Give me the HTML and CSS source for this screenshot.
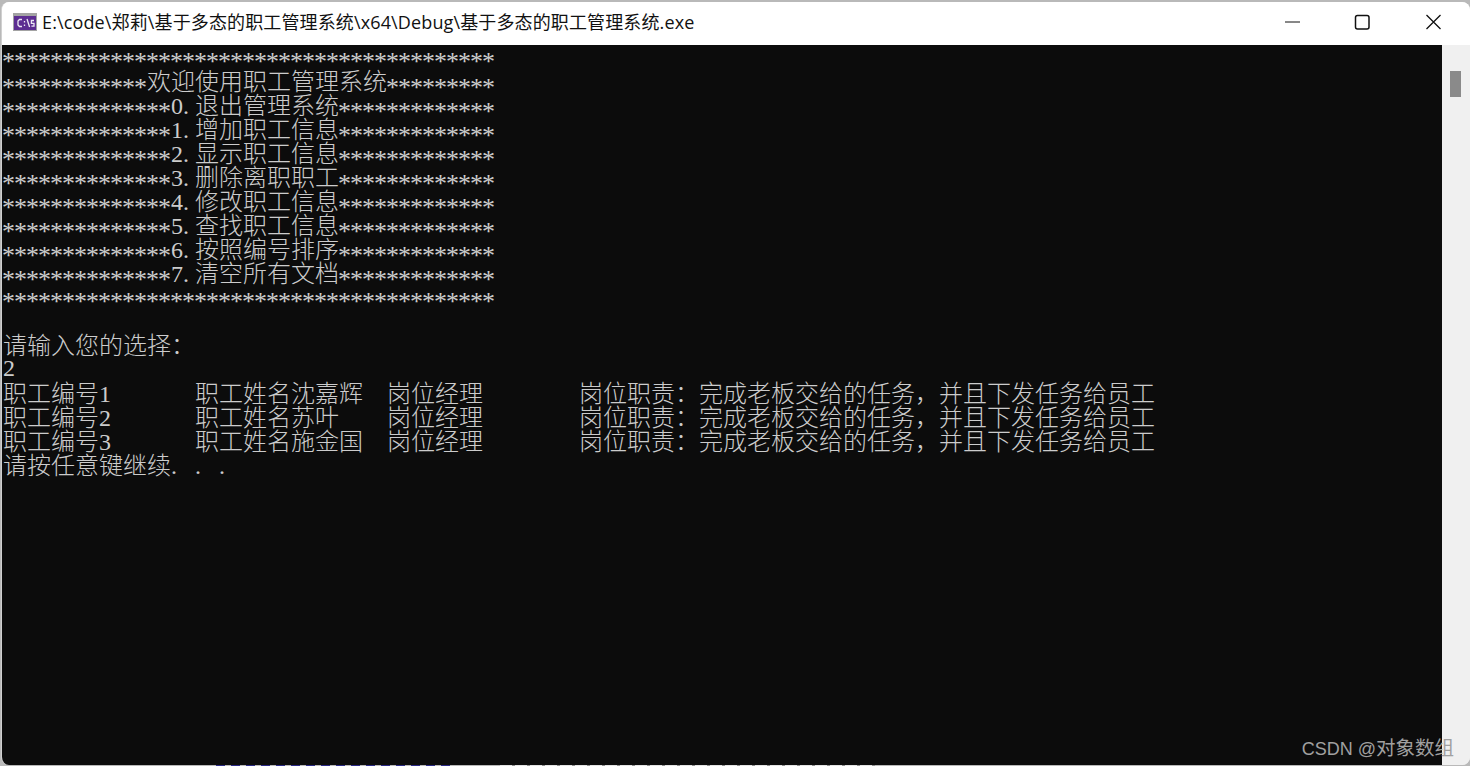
FILE: index.html
```html
<!DOCTYPE html>
<html lang="zh-CN">
<head>
<meta charset="utf-8">
<title>基于多态的职工管理系统</title>
<link rel="stylesheet" href="styles.css">
</head>
<body>
<div class="window">
  <header class="titlebar">
    <svg class="app-icon" width="24" height="18" viewBox="0 0 24 18">
      <rect width="24" height="18" fill="#a3a3a3"/>
      <rect x="1" y="3" width="22" height="14" fill="#5c2d91"/>
      <path d="M9 6.5H6.5L5 8V12L6.5 13.5H9M11.5 8v1.4M11.5 11.5v1.4M14 6l2.6 8M21 7.5h-2.6v2.8h2.6v2.8h-2.6" fill="none" stroke="#ece8f4" stroke-width="1.3"/>
    </svg>
    <span class="title">E:\code\郑莉\基于多态的职工管理系统\x64\Debug\基于多态的职工管理系统.exe</span>
    <div class="controls">
      <svg class="ctl" width="46" height="16" viewBox="0 0 46 16"><path d="M17 8h15" stroke="#111" stroke-width="1"/></svg>
      <svg class="ctl" width="46" height="16" viewBox="0 0 46 16"><rect x="16.5" y="1.5" width="13.5" height="13.5" rx="2" fill="none" stroke="#111" stroke-width="1.5"/></svg>
      <svg class="ctl" width="46" height="16" viewBox="0 0 46 16"><path d="M16.5 1l14 14M30.5 1l-14 14" stroke="#111" stroke-width="1.3"/></svg>
    </div>
  </header>
  <div class="body">
    <main class="console">
      <div class="line"><span class="s">*****************************************</span></div>
      <div class="line"><span class="s">************</span><span class="z">欢迎使用职工管理系统</span><span class="s">*********</span></div>
      <div class="line"><span class="s">**************</span>0<span class="p">.</span><span class="z">退出管理系统</span><span class="s">*************</span></div>
      <div class="line"><span class="s">**************</span>1<span class="p">.</span><span class="z">增加职工信息</span><span class="s">*************</span></div>
      <div class="line"><span class="s">**************</span>2<span class="p">.</span><span class="z">显示职工信息</span><span class="s">*************</span></div>
      <div class="line"><span class="s">**************</span>3<span class="p">.</span><span class="z">删除离职职工</span><span class="s">*************</span></div>
      <div class="line"><span class="s">**************</span>4<span class="p">.</span><span class="z">修改职工信息</span><span class="s">*************</span></div>
      <div class="line"><span class="s">**************</span>5<span class="p">.</span><span class="z">查找职工信息</span><span class="s">*************</span></div>
      <div class="line"><span class="s">**************</span>6<span class="p">.</span><span class="z">按照编号排序</span><span class="s">*************</span></div>
      <div class="line"><span class="s">**************</span>7<span class="p">.</span><span class="z">清空所有文档</span><span class="s">*************</span></div>
      <div class="line"><span class="s">*****************************************</span></div>
      <div class="line"></div>
      <div class="line"><span class="z">请输入您的选择：</span></div>
      <div class="line">2</div>
      <div class="line"><span class="z">职工编号</span>1       <span class="z">职工姓名沈嘉辉</span>  <span class="z">岗位经理</span>        <span class="z">岗位职责：完成老板交给的任务，并且下发任务给员工</span></div>
      <div class="line"><span class="z">职工编号</span>2       <span class="z">职工姓名苏叶</span>    <span class="z">岗位经理</span>        <span class="z">岗位职责：完成老板交给的任务，并且下发任务给员工</span></div>
      <div class="line"><span class="z">职工编号</span>3       <span class="z">职工姓名施金国</span>  <span class="z">岗位经理</span>        <span class="z">岗位职责：完成老板交给的任务，并且下发任务给员工</span></div>
      <div class="line"><span class="z">请按任意键继续</span><span class="p">.</span> <span class="p">.</span> <span class="p">.</span></div>
    </main>
    <aside class="scrollbar"><div class="thumb"></div></aside>
  </div>
  <div class="watermark">CSDN @<span class="wz">对象数组</span></div>
</div>
</body>
</html>
```
FILE: styles.css
```css
html, body {
  margin: 0;
  height: 100%;
  overflow: hidden;
}
body {
  background:
    repeating-linear-gradient(90deg, #2b2a86 0 9px, #b9b9b9 9px 15px) 216px 100% / 236px 1px no-repeat,
    repeating-linear-gradient(90deg, #e4e4e4 0 12px, #8d8d8d 12px 15px) 500px 100% / 375px 1px no-repeat,
    #b9b9b9;
  padding: 2px 0 1px 1px;
  box-sizing: border-box;
}
.window {
  position: relative;
  height: 100%;
  display: flex;
  flex-direction: column;
  background: #f0f0f0;
  border-radius: 8px;
  overflow: hidden;
  border-left: 1px solid #d0d0d0;
}
.titlebar {
  height: 43px;
  flex: none;
  box-sizing: border-box;
  padding: 0 0 3px 11px;
  display: flex;
  align-items: center;
  background: #fff;
}
.app-icon { flex: none; }
.title {
  margin-left: 5px;
  font: 18px/24px "Open Sans", "Noto Sans CJK SC", sans-serif;
  letter-spacing: 0.13px;
  color: #111;
  white-space: nowrap;
}
.controls {
  margin-left: auto;
  display: flex;
  padding-right: 14px;
  gap: 25px;
}
.ctl { display: block; }
.body {
  flex: 1;
  display: flex;
  min-height: 0;
}
.console {
  flex: 1;
  background: #0c0c0c;
  color: #cccccc;
  font: 24px/22px "Liberation Serif", serif;
  word-spacing: 6px;
  padding-left: 1px;
  overflow: hidden;
}
.line {
  height: 24px;
  white-space: pre;
}
.s {
  font-size: 26px;
  line-height: 22px;
  letter-spacing: -1px;
  word-spacing: 0;
  vertical-align: -6px;
  margin: 0 1px 0 -1px;
}
.p {
  display: inline-block;
  width: 12px;
}
.z {
  font: 300 24px/22px "Noto Sans CJK SC", sans-serif;
  word-spacing: 0;
}
.scrollbar {
  width: 28px;
  flex: none;
  background: #f0f0f0;
  padding-top: 26px;
  padding-left: 8px;
  box-sizing: border-box;
}
.thumb {
  width: 11px;
  height: 26px;
  background: #8a8a8a;
}
.watermark {
  position: absolute;
  right: 16px;
  bottom: 5px;
  font: 18px/22px "Liberation Sans", "Noto Sans CJK SC", sans-serif;
  color: #a0a0a0;
  white-space: nowrap;
}
.wz {
  font-size: 19.5px;
}
```
